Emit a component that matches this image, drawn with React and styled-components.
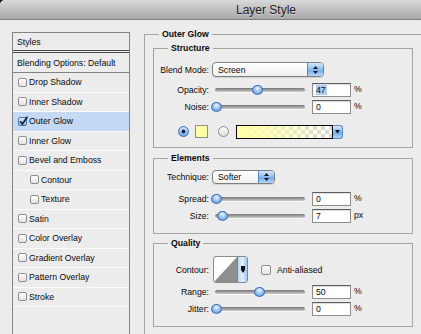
import React from 'react'
import styled, { createGlobalStyle } from 'styled-components'

const GlobalStyle = createGlobalStyle`
  html, body {
    margin: 0;
    padding: 0;
    background: #151515;
  }
  body {
    font-family: "Liberation Sans", Arial, sans-serif;
    font-size: 8.7px;
    color: #0a0a0a;
  }
  #root {
    width: 421px;
    height: 334px;
    overflow: hidden;
  }
`

//Data
const styleItems = [
  { name: 'Drop Shadow' },
  { name: 'Inner Shadow' },
  { name: 'Outer Glow', checked: true },
  { name: 'Inner Glow' },
  { name: 'Bevel and Emboss' },
  { name: 'Contour', indent: true },
  { name: 'Texture', indent: true },
  { name: 'Satin' },
  { name: 'Color Overlay' },
  { name: 'Gradient Overlay' },
  { name: 'Pattern Overlay' },
  { name: 'Stroke' },
]

const thumbLeft = (value) => `${0.875 * value - 4.5}px`

const SliderField = ({ label, value, text, unit = '%', selected, mt }) => (
  <Row $mt={mt}>
    <Label>{label}</Label>
    <Slider>
      <Track />
      <Thumb style={{ left: thumbLeft(value) }} />
    </Slider>
    <NumberBox>{selected ? <Selection>{text}</Selection> : text}</NumberBox>
    <Unit>{unit}</Unit>
  </Row>
)

const DropDown = ({ width, value }) => (
  <Select $w={width}>
    <SelectText>{value}</SelectText>
    <Stepper>
      <svg width="7" height="10" viewBox="0 0 7 10">
        <polygon points="1,4 3.5,1 6,4" fill="#1a1a1a" />
        <polygon points="1,6 3.5,9 6,6" fill="#1a1a1a" />
      </svg>
    </Stepper>
  </Select>
)

const App = () => {
  return (
    <>
      <GlobalStyle />
      <Window>
        <TitleBar>
          <Title>Layer Style</Title>
        </TitleBar>
        <Content>
          <Sidebar>
            <StylesHead>Styles</StylesHead>
            <BlendingHead>Blending Options: Default</BlendingHead>
            {styleItems.map((item) => (
              <StyleItem key={item.name} $active={item.checked} $indent={item.indent}>
                <Check $checked={item.checked}>
                  {item.checked && (
                    <svg width="11" height="11" viewBox="0 0 11 11">
                      <path d="M2.2 5.2 L4.4 8 L9.4 0.8" stroke="#14243c" strokeWidth="1.7" fill="none" />
                    </svg>
                  )}
                </Check>
                {item.name}
              </StyleItem>
            ))}
          </Sidebar>

          <Main>
            <Group $pad="4px 8px 14px 8px" $w={278}>
              <Legend $offset={6}>Outer Glow</Legend>

              <Group $pad="9px 0 8px 0">
                <Legend $offset={14}>Structure</Legend>
                <Row $h={15}>
                  <Label>Blend Mode:</Label>
                  <DropDown width={112} value="Screen" />
                </Row>
                <SliderField label="Opacity:" value={47} text="47" selected mt={6} />
                <SliderField label="Noise:" value={0} text="0" mt={3} />
                <ColorRow>
                  <Radio $on />
                  <Swatch />
                  <Radio />
                  <GradientPicker>
                    <GradientFill />
                    <GradientArrow>
                      <svg width="5" height="4" viewBox="0 0 5 4">
                        <polygon points="0,0 5,0 2.5,3.5" fill="#111" />
                      </svg>
                    </GradientArrow>
                  </GradientPicker>
                </ColorRow>
              </Group>

              <Group $pad="7px 0 10px 0" $mt={5}>
                <Legend $offset={14}>Elements</Legend>
                <Row>
                  <Label>Technique:</Label>
                  <DropDown width={63} value="Softer" />
                </Row>
                <SliderField label="Spread:" value={0} text="0" mt={8} />
                <SliderField label="Size:" value={7} text="7" unit="px" mt={3} />
              </Group>

              <Group $pad="8px 0 10px 0" $mt={4}>
                <Legend $offset={14}>Quality</Legend>
                <Row $h={27}>
                  <Label>Contour:</Label>
                  <ContourPicker>
                    <ContourCurve>
                      <svg width="100%" height="100%" viewBox="0 0 25 25" preserveAspectRatio="none">
                        <polygon points="0,25 25,0 25,25" fill="#8e8e8e" />
                      </svg>
                    </ContourCurve>
                    <ContourArrow>
                      <svg width="4" height="7" viewBox="0 0 4 7">
                        <polygon points="0,0 4,0 4,4 2,7 0,4" fill="#111" />
                      </svg>
                    </ContourArrow>
                  </ContourPicker>
                  <Check $big />
                  <span>Anti-aliased</span>
                </Row>
                <SliderField label="Range:" value={50} text="50" mt={2} />
                <SliderField label="Jitter:" value={0} text="0" mt={3} />
              </Group>
            </Group>
          </Main>
        </Content>
      </Window>
    </>
  )
}

//Window
const Window = styled.div`
  width: 532px;
  height: 334px;
  display: flex;
  flex-direction: column;
  background: #ececec;
  border-top-left-radius: 5px;
  overflow: hidden;
`
const TitleBar = styled.div`
  flex: 0 0 20px;
  box-sizing: border-box;
  display: flex;
  align-items: center;
  justify-content: center;
  background: linear-gradient(#d9d9d9, #a8a8a8);
  border-bottom: 1px solid #7c7c7c;
`
const Title = styled.div`
  font-size: 12px;
  color: #1c1c1c;
  text-shadow: 0 1px 0 rgba(255, 255, 255, 0.45);
`
const Content = styled.div`
  flex: 1;
  display: flex;
  padding: 9px 0 0 12px;
  min-height: 0;
`

//Sidebar
const Sidebar = styled.div`
  width: 118px;
  box-sizing: border-box;
  margin-top: 3px;
  display: flex;
  flex-direction: column;
  border-left: 1px solid #848484;
  border-right: 1px solid #848484;
`
const StylesHead = styled.div`
  height: 21px;
  box-sizing: border-box;
  display: flex;
  align-items: center;
  padding-left: 4px;
  border-top: 1px solid #848484;
  border-bottom: 3px double #4a4a4a;
`
const BlendingHead = styled.div`
  height: 20px;
  box-sizing: border-box;
  display: flex;
  align-items: center;
  padding-left: 4px;
  border-bottom: 1px solid #848484;
`
const StyleItem = styled.div`
  height: 19.5px;
  box-sizing: border-box;
  display: flex;
  align-items: center;
  padding-left: ${(p) => (p.$indent ? 17 : 5)}px;
  border-bottom: 1px solid #fbfbfb;
  background: ${(p) => (p.$active ? '#c4daf4' : 'transparent')};
`
const Check = styled.span`
  position: relative;
  width: ${(p) => (p.$big ? 10 : 9)}px;
  height: ${(p) => (p.$big ? 10 : 9)}px;
  box-sizing: border-box;
  margin-right: ${(p) => (p.$big ? 6 : 2)}px;
  margin-left: ${(p) => (p.$big ? 13 : 0)}px;
  border: 1px solid ${(p) => (p.$checked ? '#4f74a6' : '#8e8e8e')};
  border-radius: 2px;
  background: ${(p) =>
    p.$checked
      ? 'linear-gradient(#d9e8fb, #8fbbed)'
      : 'linear-gradient(#ffffff, #e2e2e2)'};
  svg {
    position: absolute;
    left: -1px;
    top: -2px;
  }
`

//Main panel
const Main = styled.div`
  margin-left: 14px;
`
const Group = styled.fieldset`
  margin: ${(p) => p.$mt || 0}px 0 0;
  padding: ${(p) => p.$pad};
  width: ${(p) => (p.$w ? `${p.$w}px` : 'auto')};
  box-sizing: border-box;
  min-width: 0;
  border: 1px solid #a4a4a4;
`
const Legend = styled.legend`
  margin-left: ${(p) => p.$offset}px;
  padding: 0 3px;
  font-weight: bold;
  font-size: 8.7px;
  line-height: 10px;
`
const Row = styled.div`
  display: flex;
  align-items: center;
  height: ${(p) => p.$h || 14}px;
  margin-top: ${(p) => p.$mt || 0}px;
`
const Label = styled.div`
  width: 55px;
  flex: 0 0 55px;
  text-align: right;
`

//Select
const Select = styled.div`
  width: ${(p) => p.$w}px;
  height: 100%;
  box-sizing: border-box;
  margin-left: 3px;
  display: flex;
  align-items: center;
  border: 1px solid #7f7f7f;
  border-radius: 4px;
  background: linear-gradient(#ffffff, #f0f0f0);
  box-shadow: 0 1px 1px rgba(0, 0, 0, 0.12);
  overflow: hidden;
`
const SelectText = styled.span`
  padding-left: 5px;
  flex: 1;
`
const Stepper = styled.div`
  width: 15px;
  height: 100%;
  display: flex;
  align-items: center;
  justify-content: center;
  border-left: 1px solid #5d86bd;
  background: linear-gradient(#d6e7fc, #8bbcf0 50%, #6fa8ea 51%, #b6d6fa);
`

//Slider
const Slider = styled.div`
  position: relative;
  width: 90px;
  height: 100%;
  margin-left: 6px;
  display: flex;
  align-items: center;
`
const Track = styled.div`
  width: 100%;
  height: 4px;
  border-radius: 2px;
  background: linear-gradient(#767676, #a9a9a9 60%, #cfcfcf);
  box-shadow: 0 1px 0 rgba(255, 255, 255, 0.6);
`
const Thumb = styled.div`
  position: absolute;
  top: 2px;
  width: 11px;
  height: 10px;
  box-sizing: border-box;
  border: 1px solid #3f73b5;
  border-radius: 50%;
  background: radial-gradient(circle at 50% 30%, #f0f6ff 0, #9cc4f2 45%, #4d8ad6 100%);
`
const NumberBox = styled.div`
  width: 39px;
  height: 14px;
  box-sizing: border-box;
  margin-left: 7px;
  padding-left: 3px;
  display: flex;
  align-items: center;
  background: #fff;
  border: 1px solid #8e8e8e;
  border-top-color: #5f5f5f;
  box-shadow: inset 0 1px 1px rgba(0, 0, 0, 0.15);
`
const Selection = styled.span`
  background: #acccf3;
  padding-right: 1px;
`
const Unit = styled.span`
  margin-left: 3px;
  align-self: flex-start;
  margin-top: 1px;
`

//Color row
const ColorRow = styled.div`
  display: flex;
  align-items: center;
  height: 15px;
  margin-top: 10px;
  padding-left: 24px;
`
const Radio = styled.span`
  width: 11px;
  height: 11px;
  box-sizing: border-box;
  border-radius: 50%;
  margin-right: ${(p) => (p.$on ? 6 : 7)}px;
  margin-left: ${(p) => (p.$on ? 0 : 10)}px;
  border: 1px solid ${(p) => (p.$on ? '#3b69a6' : '#8a8a8a')};
  background: ${(p) =>
    p.$on
      ? 'radial-gradient(circle, #10203a 0 1.6px, transparent 2.2px), linear-gradient(#cfe2fb, #6fa6e8)'
      : 'linear-gradient(#ffffff, #dcdcdc)'};
`
const Swatch = styled.span`
  width: 13px;
  height: 13px;
  box-sizing: border-box;
  border: 1px solid #8f8f8f;
  background: #ffffa6;
`
const GradientPicker = styled.div`
  width: 107px;
  height: 14px;
  display: flex;
`
const GradientFill = styled.div`
  flex: 1;
  border: 1px solid #0a0a0a;
  background: linear-gradient(to right, #ffffa8 0%, rgba(255, 255, 168, 0.75) 35%, rgba(255, 255, 168, 0) 100%),
    repeating-conic-gradient(#d6d6d6 0% 25%, #ffffff 0% 50%) 0 0 / 8px 8px;
`
const GradientArrow = styled.div`
  width: 9px;
  display: flex;
  align-items: center;
  justify-content: center;
  border: 1px solid #5d86bd;
  border-left: none;
  border-radius: 0 3px 3px 0;
  background: linear-gradient(#d6e7fc, #8bbcf0 50%, #6fa8ea 51%, #b6d6fa);
`

//Contour
const ContourPicker = styled.div`
  width: 35px;
  height: 27px;
  box-sizing: border-box;
  margin-left: 4px;
  display: flex;
  border: 1px solid #8a8a8a;
  border-radius: 3px;
  overflow: hidden;
  background: #fff;
`
const ContourCurve = styled.div`
  flex: 1;
  display: flex;
`
const ContourArrow = styled.div`
  width: 9px;
  display: flex;
  align-items: center;
  justify-content: center;
  border-left: 1px solid #5d86bd;
  background: linear-gradient(to right, #b9d6f8, #e4f0fd 50%, #9cc6f3);
`

export default App
